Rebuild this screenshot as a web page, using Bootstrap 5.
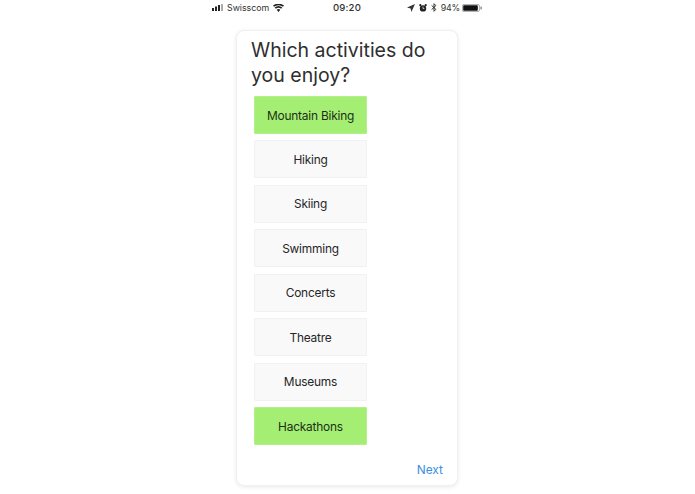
<!DOCTYPE html>
<html lang="en">
<head>
<meta charset="utf-8">
<title>Activities</title>
<link href="https://cdn.jsdelivr.net/npm/bootstrap@5.3.0/dist/css/bootstrap.min.css" rel="stylesheet">
<style>
html,body{height:494px;overflow:hidden;background:#fff}
body{font-family:Inter,"Liberation Sans",sans-serif;color:#2b2b2b}
.phone-frame{width:222px;margin-left:236px;height:494px}
.status-strip{height:15px;width:270px;margin-left:-24px;font-size:8.8px;color:#333;line-height:15px}
.status-side{flex:1 1 0}
.status-left{gap:3px}
.status-wifi{margin-left:1px}
.status-time{font-size:9.6px;font-weight:500;letter-spacing:.2px}
.status-pct{letter-spacing:-.2px;margin-right:-2px}
.quiz-panel{margin-top:15px;height:456px;border-radius:8px;border:1px solid #f0f0f0;box-shadow:0 1px 4px rgba(0,0,0,.09);padding:6px 14px 0 17px}
.quiz-title{font-size:19.5px;line-height:25px;font-weight:400;margin:1px 0 8px -3px;color:#2e2e2e}
.choice-stack{gap:6.45px;width:113px}
.choice-tile{height:38px;border:1px solid #f1f1f1;background:#f9f9f9;font-size:11.9px;letter-spacing:-.2px;color:#262626;border-radius:1px;padding:1px 0 0}
.choice-tile.picked{background:#a4ee74;border-color:#b4f08a;color:#1e2e14}
.next-link{font-size:11.9px;color:#3b8fe0;text-decoration:none;margin-top:15.5px}
</style>
</head>
<body>
<div class="phone-frame">
  <div class="status-strip d-flex align-items-center">
    <div class="status-side status-left d-flex align-items-center">
      <svg width="12" height="7" viewBox="0 0 12 7"><rect x="0" y="4" width="2" height="3" fill="#222"/><rect x="3" y="2.5" width="2" height="4.5" fill="#222"/><rect x="6" y="1" width="2" height="6" fill="#222"/><rect x="9" y="0" width="2" height="7" fill="#aaa"/></svg>
      <span>Swisscom</span>
      <svg class="status-wifi" width="11" height="8" viewBox="0 0 11 8"><path d="M5.5 8L3.7 5.8a2.8 2.8 0 0 1 3.6 0zM2.8 4.8L1.7 3.5a6 6 0 0 1 7.6 0L8.2 4.8a4.3 4.3 0 0 0-5.4 0zM1 2.8L0 1.6a8.5 8.5 0 0 1 11 0L10 2.8a7 7 0 0 0-9 0z" fill="#222"/></svg>
    </div>
    <span class="status-time">09:20</span>
    <div class="status-side d-flex align-items-center justify-content-end gap-1">
      <svg width="8" height="8" viewBox="0 0 8 8"><path d="M8 0L0 3.6l3.6.8.8 3.6z" fill="#333"/></svg>
      <svg width="8" height="8" viewBox="0 0 8 8"><circle cx="4" cy="4.4" r="3.2" fill="#222"/><circle cx="1.3" cy="1.2" r="1.1" fill="#222"/><circle cx="6.7" cy="1.2" r="1.1" fill="#222"/><path d="M4 2.6v2h1.4" stroke="#fff" stroke-width=".7" fill="none"/></svg>
      <svg width="6" height="9" viewBox="0 0 6 9"><path d="M.6 2.4l4.3 4L3 8.3V.7l1.9 1.9-4.3 4" stroke="#222" stroke-width=".9" fill="none"/></svg>
      <span class="status-pct">94%</span>
      <svg width="20" height="8" viewBox="0 0 20 8"><rect x=".4" y=".4" width="17" height="7.2" rx="1.5" fill="none" stroke="#888" stroke-width=".7"/><rect x="1.2" y="1.2" width="14.6" height="5.6" rx=".8" fill="#111"/><rect x="18.4" y="2.6" width="1.4" height="2.8" fill="#888"/></svg>
    </div>
  </div>
  <div class="quiz-panel bg-white d-flex flex-column">
    <h1 class="quiz-title">Which activities do you enjoy?</h1>
    <div class="choice-stack d-flex flex-column">
      <button class="btn choice-tile picked" type="button">Mountain Biking</button>
      <button class="btn choice-tile" type="button">Hiking</button>
      <button class="btn choice-tile" type="button">Skiing</button>
      <button class="btn choice-tile" type="button">Swimming</button>
      <button class="btn choice-tile" type="button">Concerts</button>
      <button class="btn choice-tile" type="button">Theatre</button>
      <button class="btn choice-tile" type="button">Museums</button>
      <button class="btn choice-tile picked" type="button">Hackathons</button>
    </div>
    <a class="next-link align-self-end" href="#">Next</a>
  </div>
</div>
<script src="https://cdn.jsdelivr.net/npm/bootstrap@5.3.0/dist/js/bootstrap.bundle.min.js"></script>
</body>
</html>
